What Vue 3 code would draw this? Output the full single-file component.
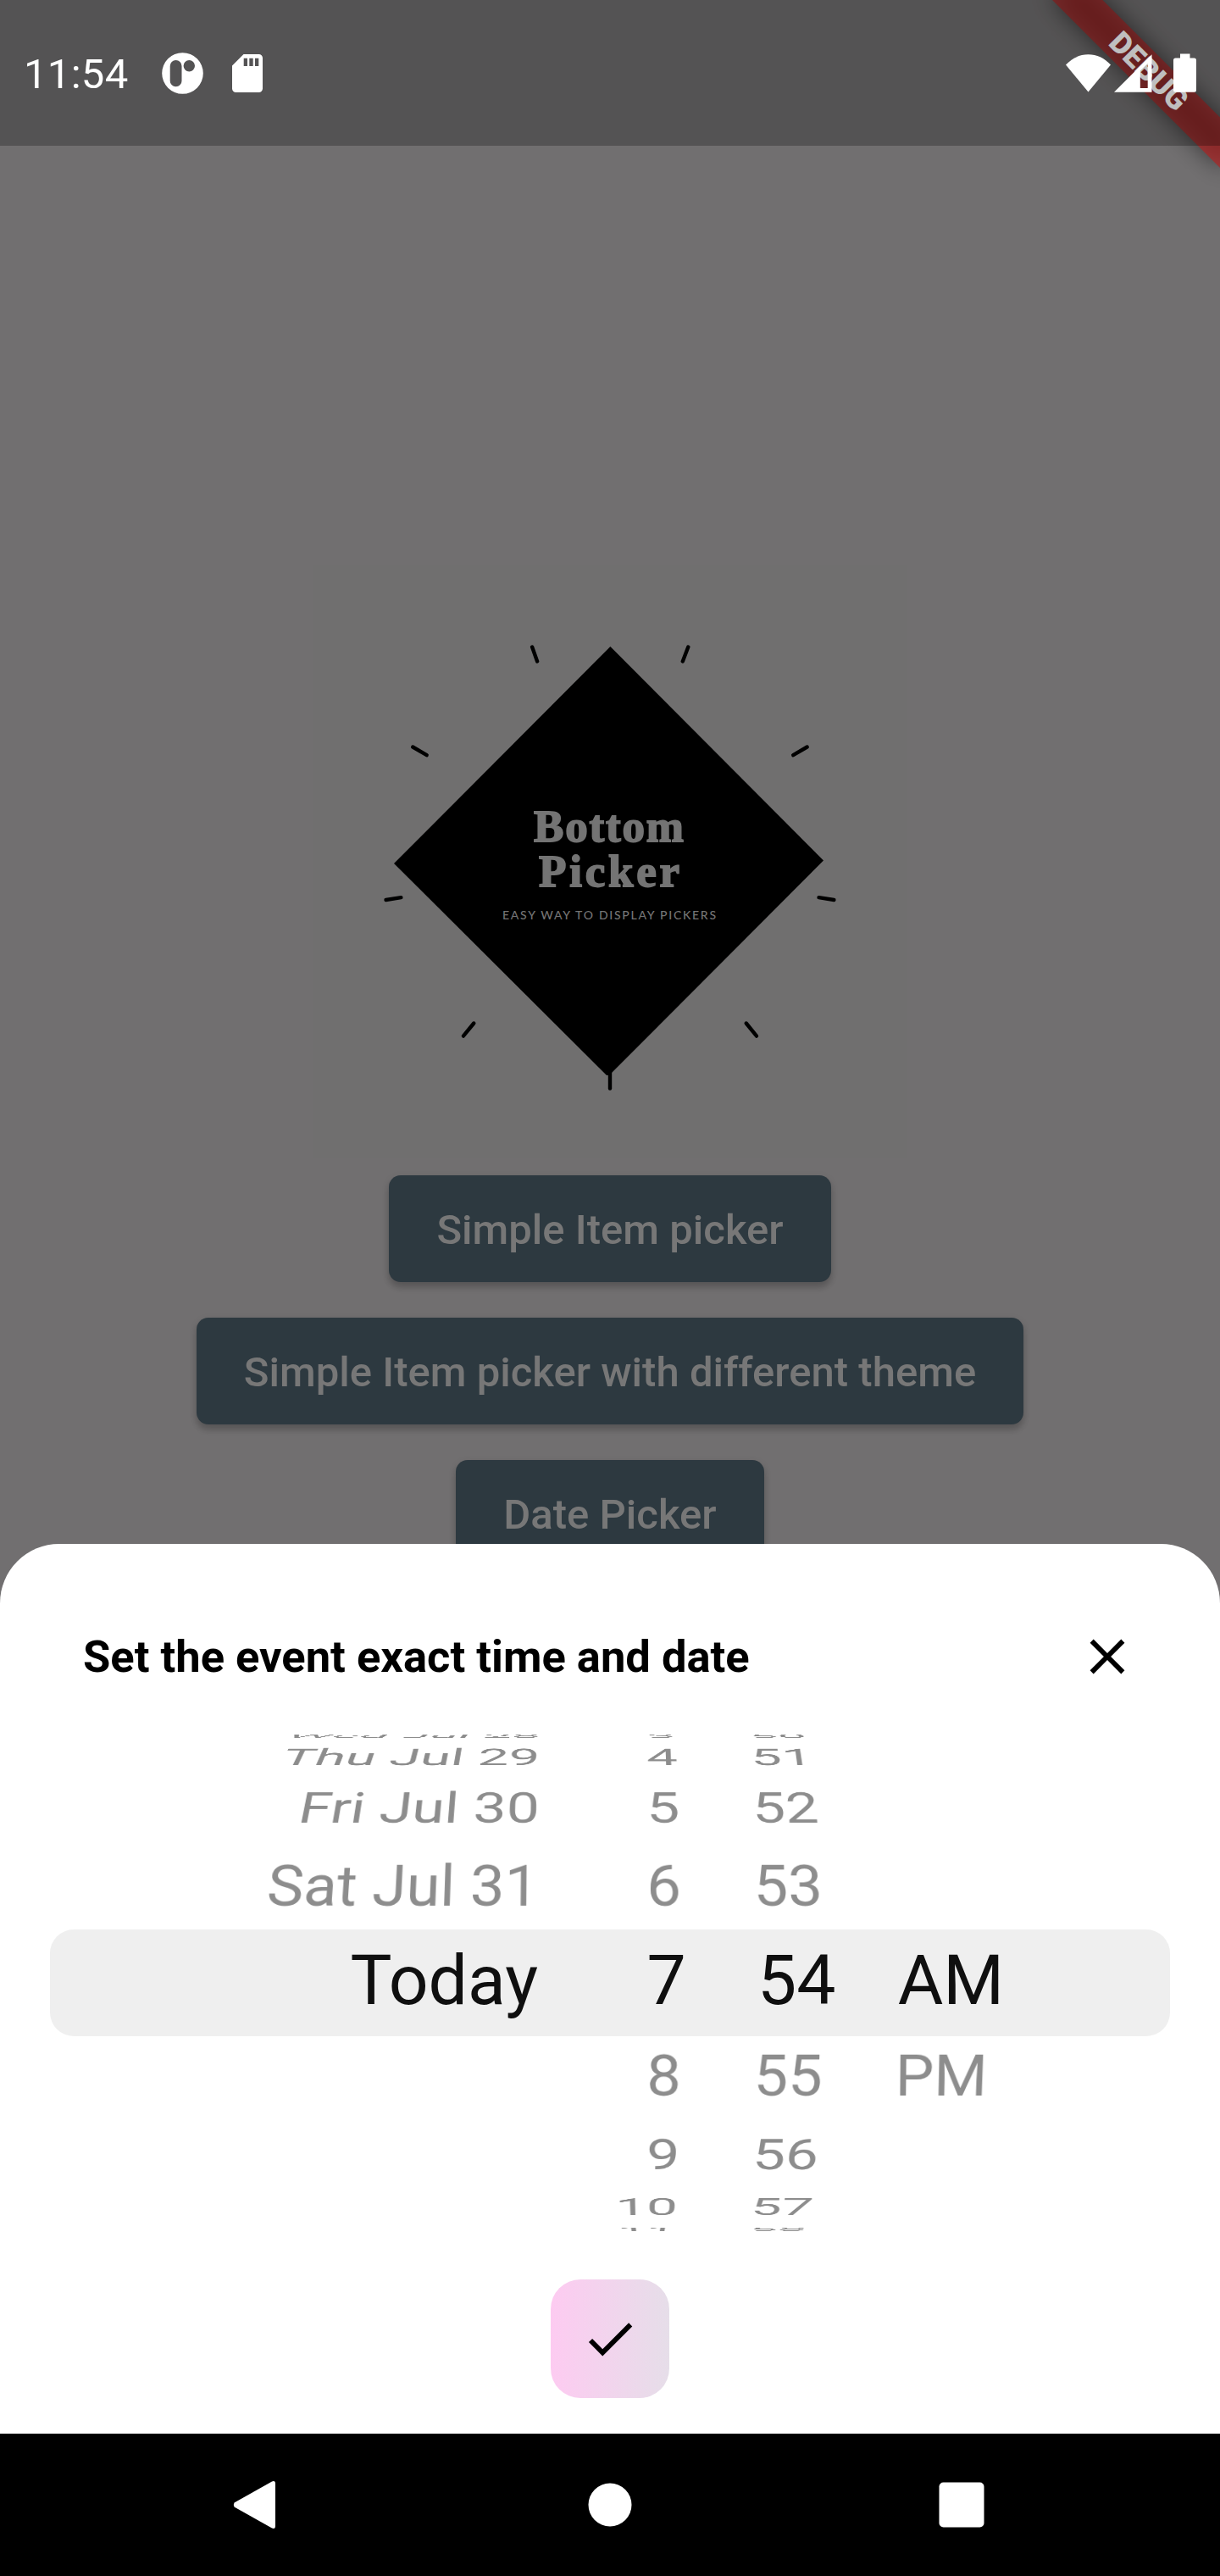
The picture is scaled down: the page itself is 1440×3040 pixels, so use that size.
<script setup>
// Metrics of the wheel, in px
const EXTENT = 112
const HEIGHT = 700
const RADIUS = (HEIGHT * 1.07) / 2
const PERSPECTIVE = 0.003 / 3.5
const SQUEEZE = 1.25
const STEP = (2 * Math.asin(1 / 1.07) * (EXTENT / HEIGHT)) / SQUEEZE
const MAGNIFY = 2.35 / 2.1

const columns = [
  {
    name: 'date',
    items: [
      [-4, 'Wed Jul 28'],
      [-3, 'Thu Jul 29'],
      [-2, 'Fri Jul 30'],
      [-1, 'Sat Jul 31'],
      [0, 'Today'],
    ],
  },
  {
    name: 'hour',
    items: [
      [-4, '3'], [-3, '4'], [-2, '5'], [-1, '6'], [0, '7'],
      [1, '8'], [2, '9'], [3, '10'], [4, '11'],
    ],
  },
  {
    name: 'minute',
    items: [
      [-4, '50'], [-3, '51'], [-2, '52'], [-1, '53'], [0, '54'],
      [1, '55'], [2, '56'], [3, '57'], [4, '58'],
    ],
  },
  { name: 'period', items: [[0, 'AM'], [1, 'PM']] },
]

// Projects a row onto the cylinder; the centre row is only magnified
function project(offset) {
  if (offset === 0) return { transform: `scale(${MAGNIFY})` }
  const a = -offset * STEP
  const s = Math.sin(a)
  const c = Math.cos(a)
  const m = [
    1, 0, 0, 0,
    0, c, 0, -PERSPECTIVE * s,
    0, 0, 1, 0,
    0, -RADIUS * s, 0, 1 + PERSPECTIVE * RADIUS * (1 - c),
  ]
  return { transform: `matrix3d(${m.map((v) => v.toFixed(9)).join(',')})` }
}

const rays = [
  [628.1, 763.5, 634.1, 780.5],
  [812.3, 763.5, 805.8, 780.5],
  [487.2, 881.5, 503.7, 891.1],
  [952.7, 881.5, 936.2, 891.1],
  [455.5, 1062, 473.4, 1059.2],
  [966.5, 1059.2, 984.4, 1062],
  [559.3, 1207.5, 546.9, 1222.6],
  [880.7, 1207.5, 893, 1222.6],
  [720, 1264, 720, 1284.6],
]

const buttons = ['Simple Item picker', 'Simple Item picker with different theme', 'Date Picker']
</script>

<template>
  <div class="screen">
    <main class="page">
      <svg class="logo" viewBox="370 667 700 700" width="700" height="700">
        <path d="M720.4 763 972 1015.5 719 1269H716L465 1019Z" fill="#000" />
        <line
          v-for="(r, i) in rays"
          :key="i"
          :x1="r[0]" :y1="r[1]" :x2="r[2]" :y2="r[3]"
          stroke="#000" stroke-width="4.4" stroke-linecap="round"
        />
        <text class="brand" x="630" y="993" textLength="177">Bottom</text>
        <text class="brand" x="636" y="1046" textLength="166">Picker</text>
        <text class="tagline" x="593" y="1085" textLength="252">EASY WAY TO DISPLAY PICKERS</text>
      </svg>
      <button v-for="b in buttons" :key="b" class="action">{{ b }}</button>
    </main>

    <div class="banner"><span>DEBUG</span></div>

    <header class="status">
      <span class="time">11:54</span>
      <svg width="49" height="49" viewBox="0 0 49 49">
        <path fill="#fff" fill-rule="evenodd" d="M24.5 0.2a24.3 24.3 0 1 1 0 48.6a24.3 24.3 0 1 1 0-48.6ZM16.6 9a6.9 6.9 0 0 0-6.9 6.9v17.5a6.9 6.9 0 0 0 13.8 0V15.9a6.9 6.9 0 0 0-6.9-6.9ZM32.3 9a6.7 6.7 0 1 0 0 13.4a6.7 6.7 0 1 0 0-13.4Z" />
      </svg>
      <svg class="sd" width="36" height="45" viewBox="0 0 36 45">
        <path fill="#fff" fill-rule="evenodd" d="M13.5 0H31.5A4.5 4.5 0 0 1 36 4.5V40.5A4.5 4.5 0 0 1 31.5 45H4.5A4.5 4.5 0 0 1 0 40.5V13.5ZM13.7 4.7V14H18V4.7ZM20.3 4.7V14H24.7V4.7ZM27 4.7V14H31.3V4.7Z" />
      </svg>
      <span class="spacer"></span>
      <svg width="53" height="45" viewBox="0 0 53 45">
        <path fill="#fff" d="M26.5 44.5 0 12.5C7.5 4.5 16.5 0.3 26.5 0.3S45.5 4.5 53 12.5Z" />
      </svg>
      <svg class="signal" width="45" height="45" viewBox="0 0 45 45">
        <path fill="#fff" fill-rule="evenodd" d="M0 44.7 44.5 0.2V44.7ZM30.8 19.5V40H39.7V11Z" />
      </svg>
      <svg class="battery" width="27" height="46" viewBox="0 0 27 46">
        <path fill="#fff" d="M8 0.5H19.5V5.5H24.5A2.5 2.5 0 0 1 27 8V43.2A2.5 2.5 0 0 1 24.5 45.7H2.5A2.5 2.5 0 0 1 0 43.2V8A2.5 2.5 0 0 1 2.5 5.5H8Z" />
      </svg>
    </header>

    <section class="sheet">
      <div class="head">
        <h1>Set the event exact time and date</h1>
        <svg width="70" height="70" viewBox="0 0 24 24">
          <path d="M19 6.41 17.59 5 12 10.59 6.41 5 5 6.41 10.59 12 5 17.59 6.41 19 12 13.41 17.59 19 19 17.59 13.41 12z" />
        </svg>
      </div>

      <div class="picker">
        <div v-for="c in columns" :key="c.name" class="wheel" :class="c.name">
          <span
            v-for="[offset, label] in c.items"
            :key="label"
            class="row"
            :class="{ current: offset === 0 }"
            :style="project(offset)"
          >{{ label }}</span>
        </div>
        <div class="selection"></div>
      </div>

      <button class="submit">
        <svg width="70" height="70" viewBox="0 0 24 24">
          <path d="M9 16.17 4.83 12l-1.42 1.41L9 19 21 7l-1.41-1.41z" />
        </svg>
      </button>
    </section>

    <nav class="nav">
      <svg width="52" height="58" viewBox="0 0 52 58">
        <path fill="#fff" d="M1.5 26.5 46 1.5Q50 0 50 4V54Q50 58 46 56.5L1.5 31.5Q0 29 1.5 26.5Z" />
      </svg>
      <svg class="home" width="52" height="52" viewBox="0 0 52 52"><circle cx="26" cy="26" r="25.5" fill="#fff" /></svg>
      <svg width="54" height="54" viewBox="0 0 54 54"><rect x="0.5" y="0.5" width="53" height="53" rx="5" fill="#fff" /></svg>
    </nav>
  </div>
</template>

<style>
body {
  margin: 0;
}
</style>

<style scoped>
.screen {
  position: relative;
  width: 1440px;
  height: 3040px;
  overflow: hidden;
  background: #716f70;
  font-family: Roboto, 'Liberation Sans', sans-serif;
}
button {
  border: 0;
  font-family: inherit;
}
.page {
  display: flex;
  flex-direction: column;
  align-items: center;
  gap: 42px;
  padding-top: 667px;
}
.logo {
  display: block;
  margin-bottom: -22px;
  background: #706f6f;
}
.brand {
  font: 700 53px 'Liberation Serif', serif;
  fill: #747474;
  stroke: #747474;
  stroke-width: 1.8px;
}
.tagline {
  font: 500 14px Lato, sans-serif;
  fill: #747474;
}
.action {
  height: 126px;
  box-sizing: border-box;
  padding: 2px 56px 0;
  border-radius: 14px;
  background: #2d3940;
  color: #777;
  font-size: 49px;
  font-weight: 500;
  letter-spacing: 0.02px;
  white-space: nowrap;
  box-shadow: 0 7px 7px rgba(0, 0, 0, 0.14), 0 3px 10px rgba(0, 0, 0, 0.12);
}

.banner {
  position: absolute;
  top: 98px;
  left: 1300px;
  width: 280px;
  height: 42px;
  transform-origin: 140px -98px;
  transform: rotate(45deg);
  color: #fff;
  font-size: 35.7px;
  font-weight: 900;
  line-height: 42px;
  text-align: center;
}
.banner::before {
  content: '';
  position: absolute;
  inset: 0;
  background: rgba(0, 0, 0, 0.5);
  filter: blur(13.9px);
}
.banner span {
  position: relative;
  display: block;
  background: rgba(183, 28, 28, 0.627);
}

.status {
  position: absolute;
  inset: 0 0 auto;
  height: 172px;
  box-sizing: border-box;
  display: flex;
  align-items: center;
  padding: 0 28px;
  background: rgba(0, 0, 0, 0.25);
}
.time {
  width: 163px;
  padding-top: 2px;
  color: #fff;
  font-size: 49px;
  letter-spacing: 0.3px;
}
.sd {
  margin-left: 34px;
}
.spacer {
  flex: 1;
}
.signal {
  margin-left: 4px;
}
.battery {
  margin-left: 25px;
}

.sheet {
  position: absolute;
  inset: 1822px 0 168px;
  display: flex;
  flex-direction: column;
  align-items: center;
  border-radius: 70px 70px 0 0;
  background: #fff;
}
.head {
  align-self: stretch;
  display: flex;
  align-items: center;
  justify-content: space-between;
  height: 70px;
  padding: 98px 98px 0;
}
h1 {
  margin: 0;
  font-size: 52.5px;
  font-weight: 700;
  color: #000;
}
.picker {
  position: relative;
  align-self: stretch;
  display: grid;
  grid-template-columns: 650.2px 168.6px 168.6px 1fr;
  height: 700px;
  padding: 0 28px;
}
.wheel {
  display: grid;
  align-items: center;
  height: 700px;
  overflow: hidden;
}
.row {
  grid-area: 1 / 1;
  height: 112px;
  line-height: 109px;
  padding: 0 42px;
  text-align: right;
  white-space: nowrap;
  font-size: 73.5px;
  color: #8d8d8d;
}
.row.current {
  line-height: 107px;
  color: #000;
}
.date .row {
  transform-origin: 95% 50%;
}
.hour .row {
  transform-origin: 50% 50%;
}
.minute .row,
.period .row {
  transform-origin: 5% 50%;
}
.hour .row {
  padding-left: 0;
}
.minute .row {
  padding: 0 43px 0 0;
}
.period .row {
  text-align: left;
}
.selection {
  position: absolute;
  top: 287.3px;
  left: 59px;
  right: 59px;
  height: 125.3px;
  border-radius: 28px;
  background: rgba(120, 120, 120, 0.12);
}
.wheel,
.selection {
  left: 31.5px;
}
.selection {
  left: 59px;
}
.submit {
  display: flex;
  align-items: center;
  justify-content: center;
  width: 140px;
  height: 140px;
  padding: 0;
  border-radius: 35px;
  background: linear-gradient(90deg, #fdcbf1, #e6dee9);
}

.nav {
  position: absolute;
  inset: auto 0 0;
  height: 168px;
  box-sizing: border-box;
  display: flex;
  align-items: center;
  justify-content: space-between;
  padding: 0 278px 0 275px;
  background: #000;
}
.home {
  margin-left: 5px;
}
</style>
